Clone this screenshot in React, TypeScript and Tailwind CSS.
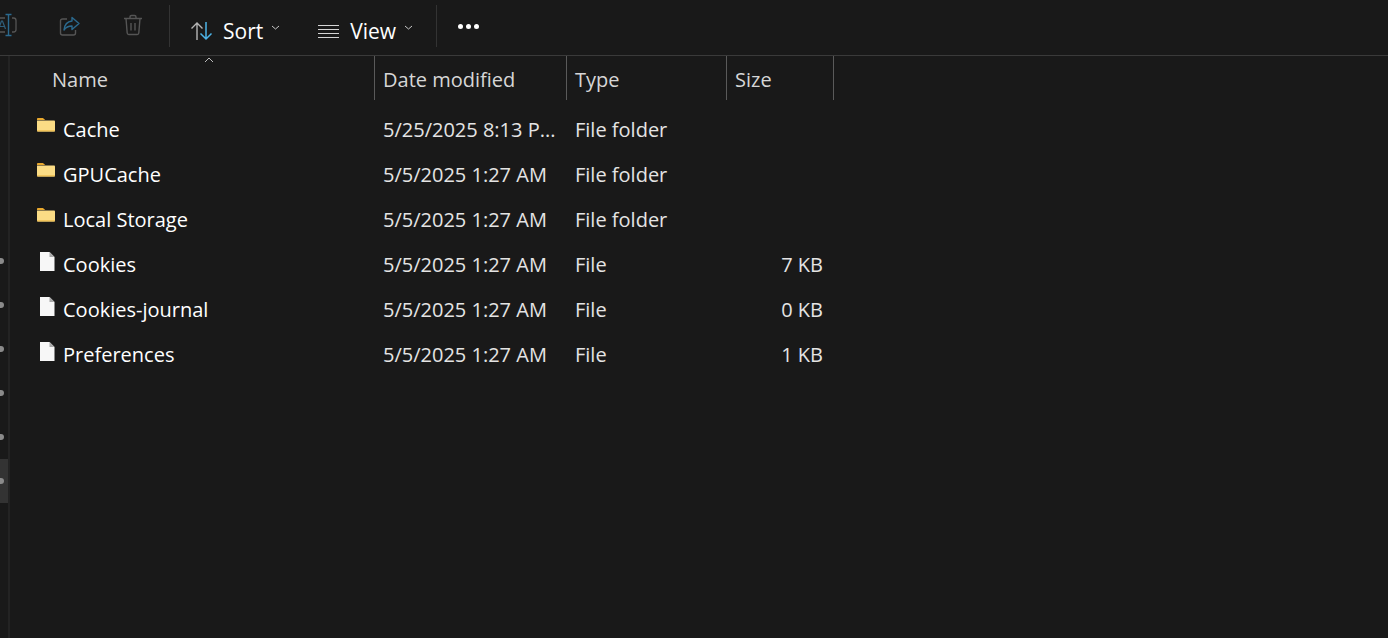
import React from 'react';

const FONT = "font-['Open_Sans','Noto_Sans',sans-serif]";

type Row = { name: string; date: string; type: string; size: string; folder: boolean };

const rows: Row[] = [
  { name: 'Cache', date: '5/25/2025 8:13 P...', type: 'File folder', size: '', folder: true },
  { name: 'GPUCache', date: '5/5/2025 1:27 AM', type: 'File folder', size: '', folder: true },
  { name: 'Local Storage', date: '5/5/2025 1:27 AM', type: 'File folder', size: '', folder: true },
  { name: 'Cookies', date: '5/5/2025 1:27 AM', type: 'File', size: '7 KB', folder: false },
  { name: 'Cookies-journal', date: '5/5/2025 1:27 AM', type: 'File', size: '0 KB', folder: false },
  { name: 'Preferences', date: '5/5/2025 1:27 AM', type: 'File', size: '1 KB', folder: false },
];

function FolderIcon() {
  return (
    <svg width="20" height="16" viewBox="0 0 20 16" className="ml-[-2px] shrink-0">
      <path d="M1 3V1.8C1 1.3 1.3 1 1.8 1H7l2.2 2z" fill="#e8a82e" />
      <path d="M1 3.4h17.2c.5 0 .8.3.8.8v9.600c0 .5-.3.8-.8.8H1.800c-.5 0-.8-.3-.8-.8z" fill="#fbdc85" />
      <path d="M1 13h18v.8c0 .5-.3.8-.8.8H1.800c-.5 0-.8-.3-.8-.8z" fill="#f2c55c" />
    </svg>
  );
}

function FileIcon() {
  return (
    <svg width="16" height="21" viewBox="0 0 16 21" className="mt-[2px] shrink-0">
      <path d="M1 1h9.500L15.500 6v14H1z" fill="#f7f7f7" />
      <path d="M10.500 1v5h5z" fill="#a8a8a8" />
    </svg>
  );
}

function Chevron({ className }: { className: string }) {
  return (
    <svg width="9" height="5" viewBox="0 0 9 5" className={className}>
      <path d="M1 1l3.500 3L8 1" fill="none" stroke="#c8c8c8" strokeWidth="1" />
    </svg>
  );
}

function Toolbar() {
  return (
    <div className="flex h-[56px] shrink-0 items-center border-b border-[#3a3a3a]">
      {/* rename, cut off by the window edge */}
      <svg width="24" height="24" viewBox="0 0 24 24" className="ml-[-7px] mt-[-5px] shrink-0">
        <path d="M12 5H3.500C2.500 5 2 5.600 2 6.500v11c0 1 .5 1.500 1.500 1.500H12M19 5h1.500c1.500 0 2.500.8 2.500 2.500v9c0 1.700-1 2.500-2.500 2.500H19" fill="none" stroke="#555555" strokeWidth="1.3" />
        <path d="M5.500 16l3-8h1l3 8M6.500 13.500h5" fill="none" stroke="#2f5f7c" strokeWidth="1.2" />
        <path d="M15.500 1.500v21M12.500 1.500h6M12.500 22.500h6" fill="none" stroke="#2b6a8f" strokeWidth="1.400" />
      </svg>
      <svg width="22" height="22" viewBox="0 0 22 22" className="ml-[42px] mt-[-4px] shrink-0">
        <path d="M8 4H3.500C2.300 4 1.500 4.800 1.500 6v12c0 1.200.8 2 2 2h11c1.200 0 2-.8 2-2v-3" fill="none" stroke="#555555" strokeWidth="1.4" />
        <path d="M13 2.500l7 6-7 6v-3.500c-3.500 0-6 1-8 4 .5-5 3.500-8.500 8-9z" fill="none" stroke="#2b6a8f" strokeWidth="1.4" strokeLinejoin="round" />
      </svg>
      <svg width="20" height="22" viewBox="0 0 20 22" className="ml-[42px] mt-[-5px] shrink-0">
        <path d="M1 4.500h18M7 4.500V3c0-1 .6-1.500 1.500-1.500h3c.9 0 1.500.5 1.500 1.500v1.500M3 4.500l1.200 14.500c.1 1 .7 1.500 1.600 1.500h8.400c.9 0 1.500-.5 1.600-1.500L17 4.500M8 9v7.500M12 9v7.500" fill="none" stroke="#555555" strokeWidth="1.4" />
      </svg>
      <div className="ml-[26px] mt-[-3px] h-[42px] w-px bg-[#333333]" />
      <svg width="24" height="20" viewBox="0 0 24 20" className="ml-[20px] mt-[7px] shrink-0">
        <path d="M7 19V2M1.500 7.500L7 2l5.500 5.500" fill="none" stroke="#b5b5b5" strokeWidth="1.4" />
        <path d="M16 1v17M10.500 12.500L16 18l5.500-5.500" fill="none" stroke="#4cb4e8" strokeWidth="1.5" />
      </svg>
      <span className="ml-[9px] mt-[7px] text-[21px] leading-none text-white">Sort</span>
      <Chevron className="ml-[8px] mt-[-1px]" />
      <svg width="22" height="15" viewBox="0 0 22 15" className="ml-[38px] mt-[7px] shrink-0">
        <path d="M0 1.500h21M0 5.500h21M0 9.500h21M0 13.500h21" fill="none" stroke="#d4d4d4" strokeWidth="1" />
      </svg>
      <span className="ml-[10px] mt-[7px] text-[21px] leading-none text-white">View</span>
      <Chevron className="ml-[8px] mt-[-1px]" />
      <div className="ml-[23px] mt-[-3px] h-[42px] w-px bg-[#333333]" />
      <div className="ml-[21px] mt-[-3px] flex gap-[3px]">
        <div className="h-[5px] w-[5px] rounded-full bg-white" />
        <div className="h-[5px] w-[5px] rounded-full bg-white" />
        <div className="h-[5px] w-[5px] rounded-full bg-white" />
      </div>
    </div>
  );
}

function HeaderCell({ label, className }: { label: string; className: string }) {
  return (
    <div className={`flex h-[44px] items-center border-r border-[#5a5a5a] pt-[4px] text-[20px] text-[#d6d6d6] ${className}`}>
      {label}
    </div>
  );
}

export default function App() {
  return (
    <div className={`flex h-[638px] w-[1388px] flex-col overflow-hidden bg-[#191919] ${FONT}`}>
      <Toolbar />
      <div className="flex min-h-0 flex-1">
        {/* nav pane edge */}
        <div className="flex w-[8px] shrink-0 flex-col pt-[183px]">
          {[0, 1, 2, 3, 4, 5].map(i => (
            <div key={i} className={`flex h-[44px] w-[8px] items-center ${i === 5 ? 'bg-[#333333]' : ''}`}>
              <div className="h-[6px] w-[4px] rounded-r-full bg-[#8a8a8a]" />
            </div>
          ))}
        </div>
        <div className="mr-[1px] w-[2px] shrink-0 bg-[#232323]" />

        <div className="relative flex-1">
          <svg width="10" height="6" viewBox="0 0 10 6" className="absolute left-[193px] top-[1px]">
            <path d="M1 5l4-4 4 4" fill="none" stroke="#bdbdbd" strokeWidth="1" />
          </svg>
          <div className="flex">
            <HeaderCell label="Name" className="w-[364px] pl-[41px]" />
            <HeaderCell label="Date modified" className="w-[192px] pl-[8px]" />
            <HeaderCell label="Type" className="w-[160px] pl-[8px]" />
            <HeaderCell label="Size" className="w-[107px] pl-[8px]" />
          </div>
          <div className="mt-[7px] flex flex-col">
            {rows.map(row => (
              <div key={row.name} className="flex h-[45px] items-center text-[20px] text-[#e4e4e4]">
                <div className="flex w-[364px] items-center pl-[25px] text-white">
                  <div className="mt-[-9px] flex w-[27px] justify-center pr-[5px]">
                    {row.folder ? <FolderIcon /> : <FileIcon />}
                  </div>
                  <span>{row.name}</span>
                </div>
                <div className="w-[192px] whitespace-nowrap pl-[8px]">{row.date}</div>
                <div className="w-[160px] pl-[8px]">{row.type}</div>
                <div className="w-[107px] pr-[11px] text-right">{row.size}</div>
              </div>
            ))}
          </div>
        </div>
      </div>
    </div>
  );
}
